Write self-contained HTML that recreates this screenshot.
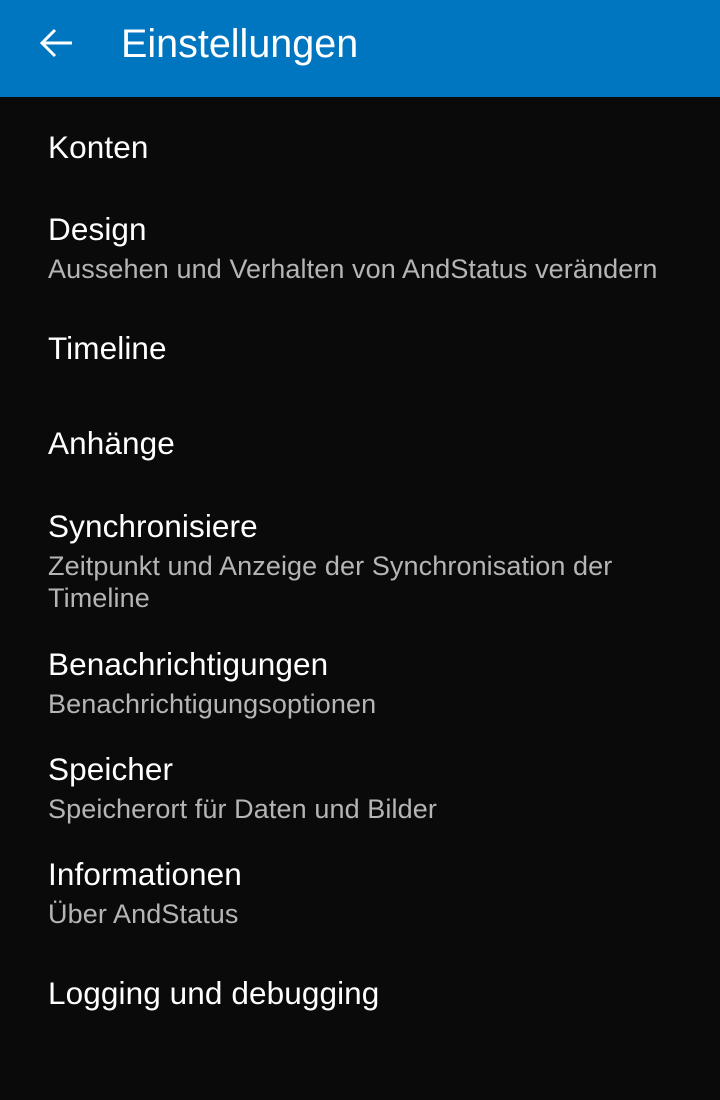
<!DOCTYPE html>
<html><head><meta charset="utf-8"><style>
html,body{margin:0;padding:0;width:720px;height:1100px;background:#0b0a0a;overflow:hidden;font-family:"Liberation Sans",sans-serif}
.bar{position:absolute;left:0;top:0;width:720px;height:97px;background:#0076c0}
.t{position:absolute;left:48px;white-space:nowrap;line-height:1}
.h{font-size:31.5px;color:#fff;letter-spacing:0.1px}
.s{font-size:27px;color:#b5b5b5;letter-spacing:0.1px}
</style></head><body>
<div class="bar">
<svg style="position:absolute;left:38px;top:27px" width="36" height="32" viewBox="0 0 36 32"><path d="M34 16H5M17 3L4 16l13 13" stroke="#fff" stroke-width="3" fill="none"/></svg>
<div class="t" style="left:121px;top:25px;font-size:39.5px;color:#fff">Einstellungen</div>
</div>
<div class="t h" style="top:132px">Konten</div>
<div class="t h" style="top:214px">Design</div>
<div class="t s" style="top:256px">Aussehen und Verhalten von AndStatus verändern</div>
<div class="t h" style="top:333px">Timeline</div>
<div class="t h" style="top:428px">Anhänge</div>
<div class="t h" style="top:511px">Synchronisiere</div>
<div class="t s" style="top:553px">Zeitpunkt und Anzeige der Synchronisation der</div>
<div class="t s" style="top:585px">Timeline</div>
<div class="t h" style="top:649px">Benachrichtigungen</div>
<div class="t s" style="top:691px">Benachrichtigungsoptionen</div>
<div class="t h" style="top:754px">Speicher</div>
<div class="t s" style="top:796px">Speicherort für Daten und Bilder</div>
<div class="t h" style="top:859px">Informationen</div>
<div class="t s" style="top:901px">Über AndStatus</div>
<div class="t h" style="top:978px">Logging und debugging</div>
</body></html>
